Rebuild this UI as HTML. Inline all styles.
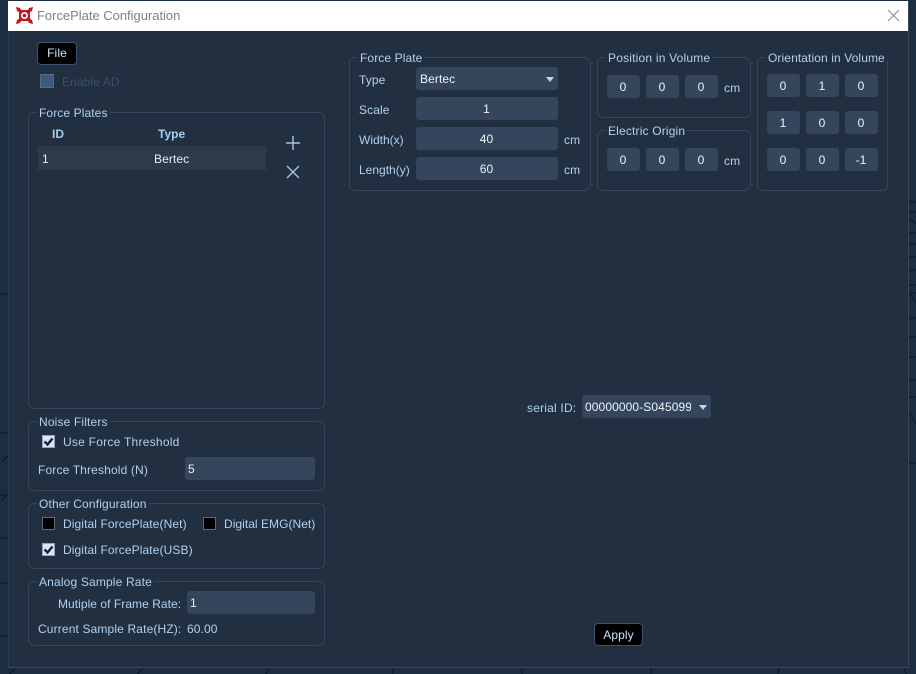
<!DOCTYPE html>
<html><head><meta charset="utf-8"><style>
*{box-sizing:border-box}
html,body{margin:0;padding:0;width:916px;height:674px;overflow:hidden;background:#1c2d41}
body{position:relative;font:12px "Liberation Sans",Arial,sans-serif;color:#b2d1f0;letter-spacing:.1px}
div,span.a{position:absolute}
.win{left:8px;top:1px;width:901px;height:667px;background:#212f40;border-right:1px solid #3a4756;border-bottom:1px solid #3a4756;border-left:1px solid #2f3c4c}
.title{left:8px;top:1px;width:900px;height:30px;background:#fff}
.tt{left:37px;top:8px;font-size:13px;color:#7c8186;letter-spacing:-.02px;white-space:nowrap}
.g{border:1px solid #36455a;border-radius:6px}
.l{white-space:nowrap;line-height:14px}
.lg{background:#212f40;padding:0 2px;line-height:14px;white-space:nowrap;color:#b2d1f0}
.i{background:#35465c;border-radius:3px;color:#eef3f8;text-align:center;line-height:24px;height:23px;letter-spacing:.1px;padding-right:1px}
.s{width:33px}
.b{background:#000;border:1px solid #3a5272;border-radius:4px;color:#cfe4f8;text-align:center;line-height:21px;height:23px}
.c{width:13px;height:13px;border:1px solid #5c6b7c;background:#000}
.k{background:#d5e6fb;border-color:#8fa3ba}
.k svg{position:absolute;left:0;top:0}
.ar{width:0;height:0;border-left:4px solid transparent;border-right:4px solid transparent;border-top:5px solid #bcd8f8}
</style></head><body>
<svg style="position:absolute;left:0;top:0" width="916" height="674">
<g stroke="#0d1521" stroke-width="1" fill="none">
<path d="M0 294H8M0 433H8M0 495H8M0 538H8M0 583H8M0 636H8M2 462L8 456M2 500L8 494"/>
<path d="M909 202H916M909 212H916M909 233H916M909 244H916M909 257H916M909 270H916M909 285H916M909 293H916M909 318H916M909 337H916M909 357H916M909 380H916M909 397H916M909 463H916M909 218L916 224M909 293L916 302M909 412L916 424"/>
<path d="M10 674L15 668M138 674L143 668M266 674L270 668M393 674V668M522 674V668M651 674V668M778 674L779 668M906 674L904 668"/>
</g></svg>
<div class="win"></div>
<div class="title"></div>
<svg style="position:absolute;left:16px;top:7px" width="17" height="17" viewBox="0 0 17 17">
<path d="M0 0L4 1L5 3H12L13 1L17 0L16 4L14 5V12L16 13L17 17L13 16L12 14H5L4 16L0 17L1 13L3 12V5L1 4Z" fill="#c8141c"/>
<circle cx="8.5" cy="8.5" r="3.5" fill="#fff"/><circle cx="8.5" cy="8.5" r="1.8" fill="#c8141c"/></svg>
<div class="tt">ForcePlate Configuration</div>
<svg style="position:absolute;left:887px;top:9px" width="13" height="13"><path d="M1 1L12 12M12 1L1 12" stroke="#8a8a8a" stroke-width="1" fill="none"/></svg>

<div class="b" style="left:37px;top:42px;width:40px">File</div>
<div class="c" style="left:40px;top:74px;width:14px;height:14px;background:#3f5a7c;border-color:#566b84"></div>
<div class="l" style="left:62px;top:75px;color:#3a4f6c">Enable AD</div>

<div class="g" style="left:28px;top:112px;width:297px;height:297px"></div>
<div class="lg" style="left:37px;top:106px">Force Plates</div>
<div class="l" style="left:52px;top:127px;font-weight:bold;color:#a9cdf0;letter-spacing:0">ID</div>
<div class="l" style="left:158px;top:127px;font-weight:bold;color:#a9cdf0;letter-spacing:0">Type</div>
<div style="left:38px;top:146px;width:228px;height:24px;background:#2d3a4b"></div>
<div class="l" style="left:42px;top:152px;color:#e4edf6">1</div>
<div class="l" style="left:154px;top:152px;color:#e4edf6">Bertec</div>
<svg style="position:absolute;left:285px;top:135px" width="16" height="46"><path d="M8 1V15M1 8H15M2 31L14 43M14 31L2 43" stroke="#a9c4e2" stroke-width="1.4" fill="none"/></svg>

<div class="g" style="left:28px;top:421px;width:297px;height:70px"></div>
<div class="lg" style="left:37px;top:415px;letter-spacing:.15px">Noise Filters</div>
<div class="c k" style="left:42px;top:435px"><svg width="11" height="11"><path d="M1.5 5.5L4.5 8.5L9.5 2.5" stroke="#16202c" stroke-width="2.4" fill="none"/></svg></div>
<div class="l" style="left:63px;top:435px;letter-spacing:.25px">Use Force Threshold</div>
<div class="l" style="left:38px;top:463px;letter-spacing:.15px">Force Threshold (N)</div>
<div class="i" style="left:185px;top:457px;width:130px;text-align:left;padding-left:3px">5</div>

<div class="g" style="left:28px;top:503px;width:297px;height:66px"></div>
<div class="lg" style="left:37px;top:497px;letter-spacing:.15px">Other Configuration</div>
<div class="c" style="left:42px;top:517px"></div>
<div class="l" style="left:63px;top:517px">Digital ForcePlate(Net)</div>
<div class="c" style="left:203px;top:517px"></div>
<div class="l" style="left:224px;top:517px;letter-spacing:.04px">Digital EMG(Net)</div>
<div class="c k" style="left:42px;top:543px"><svg width="11" height="11"><path d="M1.5 5.5L4.5 8.5L9.5 2.5" stroke="#16202c" stroke-width="2.4" fill="none"/></svg></div>
<div class="l" style="left:63px;top:543px">Digital ForcePlate(USB)</div>

<div class="g" style="left:28px;top:581px;width:297px;height:65px"></div>
<div class="lg" style="left:37px;top:575px;letter-spacing:.16px">Analog Sample Rate</div>
<div class="l" style="left:58px;top:597px;letter-spacing:.05px">Mutiple of Frame Rate:</div>
<div class="i" style="left:187px;top:591px;width:128px;text-align:left;padding-left:3px">1</div>
<div class="l" style="left:38px;top:622px;letter-spacing:.14px">Current Sample Rate(HZ):</div>
<div class="l" style="left:187px;top:622px">60.00</div>

<div class="g" style="left:349px;top:57px;width:242px;height:134px"></div>
<div class="lg" style="left:358px;top:51px">Force Plate</div>
<div class="l" style="left:359px;top:73px">Type</div>
<div class="i" style="left:416px;top:67px;width:142px;text-align:left;padding-left:4px">Bertec</div>
<div class="ar" style="left:546px;top:77px"></div>
<div class="l" style="left:359px;top:103px">Scale</div>
<div class="i" style="left:416px;top:97px;width:142px">1</div>
<div class="l" style="left:359px;top:133px;letter-spacing:0">Width(x)</div>
<div class="i" style="left:416px;top:127px;width:142px">40</div>
<div class="l" style="left:564px;top:133px">cm</div>
<div class="l" style="left:359px;top:163px;letter-spacing:0">Length(y)</div>
<div class="i" style="left:416px;top:157px;width:142px">60</div>
<div class="l" style="left:564px;top:163px">cm</div>

<div class="g" style="left:597px;top:57px;width:154px;height:61px"></div>
<div class="lg" style="left:606px;top:51px;letter-spacing:.2px">Position in Volume</div>
<div class="i s" style="left:607px;top:75px">0</div><div class="i s" style="left:646px;top:75px">0</div><div class="i s" style="left:685px;top:75px">0</div>
<div class="l" style="left:724px;top:81px">cm</div>

<div class="g" style="left:597px;top:130px;width:154px;height:61px"></div>
<div class="lg" style="left:606px;top:124px;letter-spacing:.17px">Electric Origin</div>
<div class="i s" style="left:607px;top:148px">0</div><div class="i s" style="left:646px;top:148px">0</div><div class="i s" style="left:685px;top:148px">0</div>
<div class="l" style="left:724px;top:154px">cm</div>

<div class="g" style="left:757px;top:57px;width:131px;height:134px"></div>
<div class="lg" style="left:766px;top:51px">Orientation in Volume</div>
<div class="i s" style="left:767px;top:74px">0</div><div class="i s" style="left:806px;top:74px">1</div><div class="i s" style="left:845px;top:74px">0</div>
<div class="i s" style="left:767px;top:111px">1</div><div class="i s" style="left:806px;top:111px">0</div><div class="i s" style="left:845px;top:111px">0</div>
<div class="i s" style="left:767px;top:148px">0</div><div class="i s" style="left:806px;top:148px">0</div><div class="i s" style="left:845px;top:148px">-1</div>

<div class="l" style="left:527px;top:401px;letter-spacing:.2px">serial ID:</div>
<div class="i" style="left:582px;top:395px;width:129px;text-align:left;padding-left:3px;overflow:hidden;white-space:nowrap"><span style="display:block;width:106px;overflow:hidden">00000000-S04509912</span></div>
<div class="ar" style="left:699px;top:405px"></div>

<div class="b" style="left:594px;top:623px;width:49px;line-height:22px">Apply</div>
</body></html>
